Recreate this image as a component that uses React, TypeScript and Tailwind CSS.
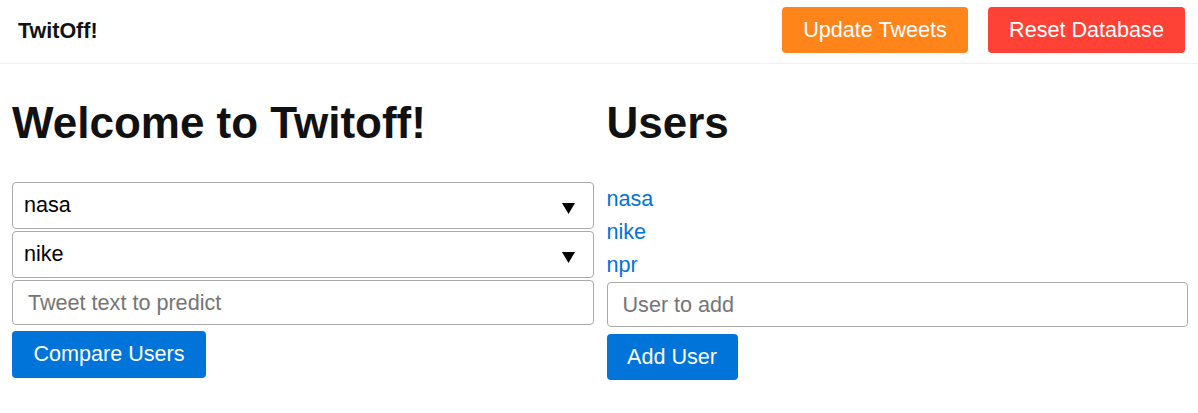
import React from "react";

const font = { fontFamily: '"Liberation Sans", Arial, sans-serif' };

function Triangle() {
  return (
    <svg
      className="pointer-events-none absolute right-[19px] top-[21px]"
      width="13"
      height="11"
      viewBox="0 0 13 11"
    >
      <polygon points="0,0 13,0 6.5,11" fill="#000" />
    </svg>
  );
}

function Select({ value, options }: { value: string; options: string[] }) {
  return (
    <div className="relative">
      <select
        defaultValue={value}
        className="block h-[47px] w-full appearance-none rounded-[4px] border border-[#aaaaaa] bg-white pl-[11px] pr-10 text-[21.6px] text-black outline-none"
        style={font}
      >
        {options.map((o) => (
          <option key={o} value={o}>
            {o}
          </option>
        ))}
      </select>
      <Triangle />
    </div>
  );
}

export default function App() {
  const users = ["nasa", "nike", "npr"];
  return (
    <div className="min-h-[413px] w-full bg-white text-[#111]" style={font}>
      <header className="flex h-[64px] items-start justify-between border-b border-[#f1f1f1] pl-[18px] pr-[13px]">
        <div className="pt-[19px] text-[21.5px] font-bold leading-[25px] text-[#111]">
          TwitOff!
        </div>
        <div className="flex gap-[20px] pt-[7px]">
          <button className="h-[46px] w-[186px] rounded-[4px] bg-[#ff851b] text-[21.6px] text-white">
            Update Tweets
          </button>
          <button className="h-[46px] w-[197px] rounded-[4px] bg-[#ff4136] text-[21.6px] text-white">
            Reset Database
          </button>
        </div>
      </header>

      <main className="grid grid-cols-2 gap-[13px] pl-[12px] pr-[10px]">
        <section>
          <h1 className="mt-[34px] text-[44px] font-bold leading-[50px] text-[#111]">
            Welcome to Twitoff!
          </h1>
          <form className="mt-[34px] flex flex-col" onSubmit={(e) => e.preventDefault()}>
            <Select value="nasa" options={users} />
            <div className="mt-[2px]">
              <Select value="nike" options={users} />
            </div>
            <input
              type="text"
              placeholder="Tweet text to predict"
              className="mt-[2px] block h-[45px] w-full rounded-[4px] border border-[#aaaaaa] px-[15px] text-[21.6px] text-black outline-none placeholder:text-[#757575]"
              style={font}
            />
            <div className="mt-[6px]">
              <button className="h-[47px] w-[194px] rounded-[4px] bg-[#0074d9] text-[21.6px] text-white">
                Compare Users
              </button>
            </div>
          </form>
        </section>

        <section>
          <h1 className="mt-[34px] text-[44px] font-bold leading-[50px] text-[#111]">
            Users
          </h1>
          <ul className="mt-[34px]">
            {users.map((u) => (
              <li key={u} className="text-[21.6px] leading-[33px]">
                <a href="#" className="text-[#0074d9]">
                  {u}
                </a>
              </li>
            ))}
          </ul>
          <form className="mt-[1px] flex flex-col" onSubmit={(e) => e.preventDefault()}>
            <input
              type="text"
              placeholder="User to add"
              className="block h-[45px] w-full rounded-[4px] border border-[#aaaaaa] px-[15px] text-[21.6px] text-black outline-none placeholder:text-[#757575]"
              style={font}
            />
            <div className="mt-[7px]">
              <button className="h-[46px] w-[131px] rounded-[4px] bg-[#0074d9] text-[21.6px] text-white">
                Add User
              </button>
            </div>
          </form>
        </section>
      </main>
    </div>
  );
}
